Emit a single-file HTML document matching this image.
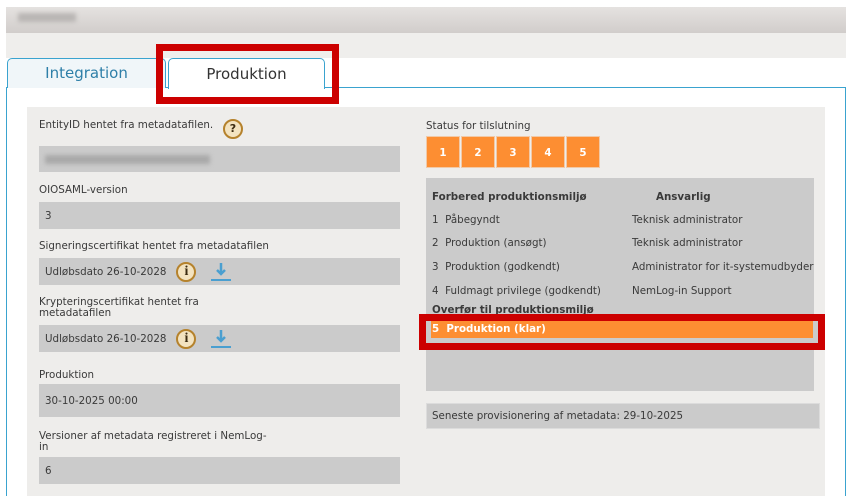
<!DOCTYPE html>
<html><head><style>
*{margin:0;padding:0;box-sizing:border-box}
body{width:853px;height:496px;background:#fff;font-family:"DejaVu Sans",Verdana,sans-serif;font-size:10.3px;color:#3a3a3a;position:relative;overflow:hidden}
.a{position:absolute}
.f{position:absolute;background:#cbcbcb;left:39px;width:361px;padding-left:6px;display:flex;align-items:center}
.lbl{position:absolute;left:39px;line-height:11px}
.bx{position:absolute;top:136px;width:34px;height:32px;background:#fd8e32;color:#fff;font-weight:bold;text-align:center;line-height:32px;border:1px solid #f2c9a6}
.info{display:inline-block;width:20px;height:20px;border-radius:50%;border:2px solid #b5822c;background:#f3e3c0;text-align:center;font-weight:bold;font-family:"Liberation Serif",serif;font-size:14px;line-height:16px;color:#3a2a10;margin-left:10px}
.dl{margin-left:15px}
</style></head><body>
<div class="a" style="left:6px;top:7px;width:840px;height:26px;background:linear-gradient(#e5e2e0,#d1cdcb)"></div>
<div class="a" style="left:18px;top:13px;width:58px;height:9px;background:#b9b6b4;filter:blur(2px)"></div>
<div class="a" style="left:6px;top:33px;width:840px;height:25px;background:#efeeec"></div>
<div class="a" style="left:6px;top:87px;width:840px;height:409px;border:1px solid #3aa3cf;border-bottom:none;background:#fff"></div>
<div class="a" style="left:7px;top:58px;width:159px;height:30px;background:#f0f6f9;border:1px solid #3aa3cf;border-bottom:none;border-radius:5px 5px 0 0;color:#2e7fa8;font-size:15px;text-align:center;line-height:28px">Integration</div>
<div class="a" style="left:168px;top:58px;width:157px;height:31px;background:#fff;border:1px solid #3aa3cf;border-bottom:none;border-radius:5px 5px 0 0;color:#333;font-size:15px;text-align:center;line-height:31px">Produktion</div>
<div class="a" style="left:156px;top:44px;width:183px;height:60px;border:7px solid #cc0000"></div>
<div class="a" style="left:27px;top:107px;width:798px;height:389px;background:#eeedeb"></div>

<div class="lbl" style="top:120px">EntityID hentet fra metadatafilen.</div>
<div class="a" style="left:223px;top:119px;width:20px;height:20px;border-radius:50%;border:2px solid #b5822c;background:#f3e3c0;text-align:center;font-weight:bold;font-size:11px;line-height:16px;color:#3a2a10">?</div>
<div class="f" style="top:146px;height:26px"><div style="width:165px;height:9px;background:#a9a9a9;filter:blur(2px)"></div></div>
<div class="lbl" style="top:185px">OIOSAML-version</div>
<div class="f" style="top:202px;height:27px">3</div>
<div class="lbl" style="top:241px">Signeringscertifikat hentet fra metadatafilen</div>
<div class="f" style="top:258px;height:27px">Udløbsdato 26-10-2028<span class="info">i</span>
<svg class="dl" width="20" height="20" viewBox="0 0 20 20"><path d="M10 1v11M6 8l4 4 4-4" stroke="#4a9fd0" stroke-width="2.5" fill="none"/><path d="M0 18h20" stroke="#4a9fd0" stroke-width="2"/></svg></div>
<div class="lbl" style="top:297px">Krypteringscertifikat hentet fra<br>metadatafilen</div>
<div class="f" style="top:325px;height:27px">Udløbsdato 26-10-2028<span class="info">i</span>
<svg class="dl" width="20" height="20" viewBox="0 0 20 20"><path d="M10 1v11M6 8l4 4 4-4" stroke="#4a9fd0" stroke-width="2.5" fill="none"/><path d="M0 18h20" stroke="#4a9fd0" stroke-width="2"/></svg></div>
<div class="lbl" style="top:370px">Produktion</div>
<div class="f" style="top:384px;height:33px">30-10-2025 00:00</div>
<div class="lbl" style="top:431px">Versioner af metadata registreret i NemLog-<br>in</div>
<div class="f" style="top:457px;height:27px">6</div>

<div class="a" style="left:426px;top:120px">Status for tilslutning</div>
<div class="bx" style="left:426px">1</div><div class="bx" style="left:461px">2</div><div class="bx" style="left:496px">3</div><div class="bx" style="left:531px">4</div><div class="bx" style="left:566px">5</div>
<div class="a" style="left:426px;top:178px;width:388px;height:213px;background:#cbcbcb"></div>
<div class="a" style="left:432px;top:191px;font-weight:bold">Forbered produktionsmiljø</div>
<div class="a" style="left:656px;top:191px;font-weight:bold">Ansvarlig</div>
<div class="a" style="left:432px;top:214px">1&nbsp; Påbegyndt</div><div class="a" style="left:632px;top:214px">Teknisk administrator</div>
<div class="a" style="left:432px;top:237px">2&nbsp; Produktion (ansøgt)</div><div class="a" style="left:632px;top:237px">Teknisk administrator</div>
<div class="a" style="left:432px;top:261px">3&nbsp; Produktion (godkendt)</div><div class="a" style="left:632px;top:261px">Administrator for it-systemudbyder</div>
<div class="a" style="left:432px;top:285px">4&nbsp; Fuldmagt privilege (godkendt)</div><div class="a" style="left:632px;top:285px">NemLog-in Support</div>
<div class="a" style="left:432px;top:304px;font-weight:bold">Overfør til produktionsmiljø</div>
<div class="a" style="left:419px;top:314px;width:406px;height:36px;border:7px solid #cc0000;background:#cbcbcb"></div>
<div class="a" style="left:431px;top:321px;width:382px;height:17px;background:#fd8e32;color:#fff;font-weight:bold;line-height:17px;padding-left:1px">5&nbsp; Produktion (klar)</div>
<div class="a" style="left:426px;top:403px;width:394px;height:26px;background:#cbcbcb;border:1px solid #dcdcdc;padding-left:5px;line-height:24px">Seneste provisionering af metadata: 29-10-2025</div>
</body></html>
